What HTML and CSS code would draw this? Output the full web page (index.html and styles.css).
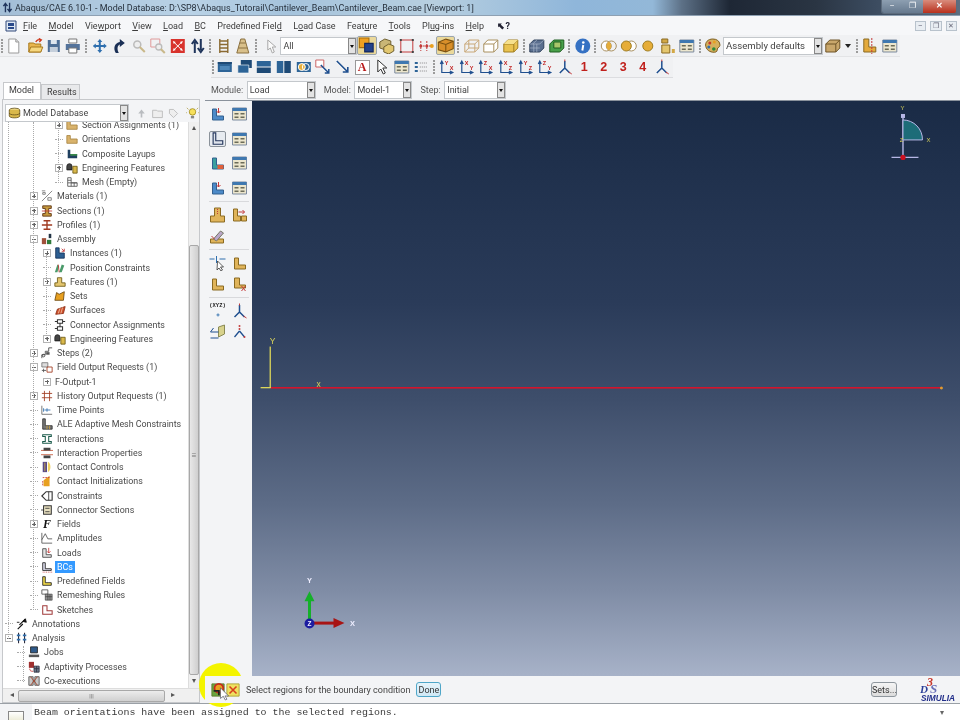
FILE: index.html
```html
<!DOCTYPE html>
<html lang="en">
<head>
<meta charset="utf-8">
<title>Abaqus/CAE</title>
<link rel="stylesheet" href="styles.css">
</head>
<body>
<svg class="sprite" aria-hidden="true">
  <symbol id="new" viewBox="0 0 16 16"><path d="M3 1h7l3 3v11H3z" fill="#fff" stroke="#9a9a9a"/><path d="M10 1v3h3" fill="#ddd" stroke="#9a9a9a"/></symbol>
  <symbol id="open" viewBox="0 0 16 16"><path d="M1 14V5h5l1 1h6v8z" fill="#e9b64e" stroke="#a87a1e"/><path d="M1 14l2-5h12l-2 5z" fill="#f6d77f" stroke="#a87a1e"/><path d="M8 4c1-2 3-3 5-2M11 .5l2.500 1.500-2 2" fill="none" stroke="#cf3a1e" stroke-width="1.400"/></symbol>
  <symbol id="save" viewBox="0 0 16 16"><path d="M2 2h12v12H2z" fill="#4f6f96"/><path d="M5 2h6v4H5z" fill="#dfe6ee"/><path d="M4 9h8v5H4z" fill="#c5cfdb"/></symbol>
  <symbol id="print" viewBox="0 0 16 16"><path d="M4 1h8v4H4z" fill="#fff" stroke="#777"/><path d="M1 6h14v6H1z" fill="#54739b"/><path d="M4 10h8v5H4z" fill="#fff" stroke="#777"/></symbol>
  <symbol id="pan" viewBox="0 0 16 16"><path d="M8 1l2.500 3H9v3h3V5.500L15 8l-3 2.500V9H9v3h1.500L8 15l-2.500-3H7V9H4v1.500L1 8l3-2.500V7h3V4H5.500z" fill="#2f6fae"/></symbol>
  <symbol id="rotate" viewBox="0 0 16 16"><path d="M5 15C2 10 4 5 9 4V1l5 4-5 4V6.500C6.500 7.500 6 11 8 15z" fill="#1a2f55"/></symbol>
  <symbol id="zoom" viewBox="0 0 16 16"><circle cx="6.500" cy="6.500" r="3.500" fill="#eee" stroke="#bbb" stroke-width="1.500"/><path d="M9 9l5 5" stroke="#c9b88a" stroke-width="2"/></symbol>
  <symbol id="boxzoom" viewBox="0 0 16 16"><path d="M1 1h9v8H1z" fill="none" stroke="#e09a9a"/><circle cx="9" cy="9" r="3" fill="#eee" stroke="#bbb" stroke-width="1.300"/><path d="M11 11l4 4" stroke="#c9b88a" stroke-width="2"/></symbol>
  <symbol id="fit" viewBox="0 0 16 16"><path d="M1 1h14v14H1z" fill="#d8322c"/><path d="M3 3l3 1-2 2zM13 3l-1 3-2-2zM3 13l1-3 2 2zM13 13l-3-1 2-2z" fill="#fff"/><path d="M5 5l6 6M11 5l-6 6" stroke="#fff"/></symbol>
  <symbol id="cycle" viewBox="0 0 16 16"><path d="M5 15V4M2 6l3-4 3 4M11 1v11M8 10l3 4 3-4" fill="none" stroke="#20355c" stroke-width="2"/></symbol>
  <symbol id="ladder" viewBox="0 0 16 16"><path d="M4 1v14M12 1v14M4 3h8M4 6.500h8M4 10h8M4 13.500h8" fill="none" stroke="#8a6a32" stroke-width="1.400"/></symbol>
  <symbol id="trap" viewBox="0 0 16 16"><path d="M6 1h4l4 14H2zM5 5h6M3.500 10h9" fill="#d9c08a" stroke="#8a7040"/></symbol>
  <symbol id="pick" viewBox="0 0 16 16"><path d="M4 2l8 7H8.500l2 5-2 1-2-5L4 12z" fill="#fafafa" stroke="#a9a9a9"/></symbol>
  <symbol id="sel1" viewBox="0 0 16 16"><path d="M1 1h9v9H1z" fill="#f0a020" stroke="#a66c10"/><path d="M6 6h8v8H6z" fill="#23418a" stroke="#13275c"/></symbol>
  <symbol id="sel2" viewBox="0 0 16 16"><path d="M1 4l5-3 6 2v6l-5 3-6-2z" fill="#c9b676" stroke="#6f6030"/><path d="M5 9l5-3 5 2v5l-5 3-5-2z" fill="#e2c770" stroke="#6f6030"/></symbol>
  <symbol id="sel3" viewBox="0 0 16 16"><path d="M2 2h12v12H2z" fill="none" stroke="#c43b3b"/><path d="M1 1h2v2H1zM13 1h2v2h-2zM1 13h2v2H1zM13 13h2v2h-2z" fill="#444"/></symbol>
  <symbol id="sel4" viewBox="0 0 16 16"><path d="M2 8h12M3 3v10M9 3v10" stroke="#c43b3b" stroke-dasharray="2 1"/><circle cx="3" cy="8" r="1.500" fill="#c43b3b"/><circle cx="9" cy="8" r="1.500" fill="#c43b3b"/><circle cx="14" cy="8" r="2" fill="#e8a020"/></symbol>
  <symbol id="sel5" viewBox="0 0 16 16"><path d="M1 5l7-3 7 2v7l-7 3-7-2z" fill="#d98f2a" stroke="#7a5010"/><path d="M1 5l7 2 7-3M8 7v7" fill="none" stroke="#7a5010"/></symbol>
  <symbol id="wire" viewBox="0 0 16 16"><path d="M1 6l4-4h10v8l-4 4H1zM1 6h10v8M11 6l4-4M5 2v8h10M5 10l-4 4" fill="none" stroke="#c9a878"/></symbol>
  <symbol id="hid" viewBox="0 0 16 16"><path d="M1 6l4-4h10v8l-4 4H1zM1 6h10v8M11 6l4-4" fill="#fff" stroke="#a9905f"/></symbol>
  <symbol id="solid" viewBox="0 0 16 16"><path d="M1 6l4-4h10v8l-4 4H1z" fill="#e9c24f" stroke="#a07e22"/><path d="M1 6h10v8M11 6l4-4" fill="none" stroke="#a07e22"/><path d="M5 2h10l-4 4H1z" fill="#f6e08c"/></symbol>
  <symbol id="mesh" viewBox="0 0 16 16"><path d="M1 6l4-4h10v8l-4 4H1z" fill="#5b6f8f" stroke="#33445f"/><path d="M1 10h10M5 6v8M8 6v8M11 6l4-4M8 2L4 6M1 6h10" fill="none" stroke="#a9b6c9" stroke-width=".7"/></symbol>
  <symbol id="green" viewBox="0 0 16 16"><path d="M1 6l4-4h10v8l-4 4H1z" fill="#49a04a" stroke="#1f5e20"/><path d="M5 4h7v6H5z" fill="#a9c66a" stroke="#1f5e20"/></symbol>
  <symbol id="info" viewBox="0 0 16 16"><circle cx="8" cy="8" r="7.500" fill="#3571c3"/><circle cx="8.500" cy="4.500" r="1.300" fill="#fff"/><path d="M8.500 7l-1 5.500" stroke="#fff" stroke-width="2"/></symbol>
  <symbol id="c1" viewBox="0 0 16 16"><circle cx="5.500" cy="8" r="5" fill="#fff" stroke="#a9905f"/><circle cx="10.500" cy="8" r="5" fill="none" stroke="#a9905f"/><path d="M8 3.700a5 5 0 0 1 0 8.600a5 5 0 0 1 0-8.600" fill="#e6ad38"/></symbol>
  <symbol id="c2" viewBox="0 0 16 16"><circle cx="10.500" cy="8" r="5" fill="#fff" stroke="#a9905f"/><circle cx="5.500" cy="8" r="5" fill="#e6ad38" stroke="#a07e22"/></symbol>
  <symbol id="c3" viewBox="0 0 16 16"><circle cx="8" cy="8" r="5" fill="#e6ad38" stroke="#a07e22"/></symbol>
  <symbol id="parts" viewBox="0 0 16 16"><path d="M2 1h6v4H2z" fill="#d2a846" stroke="#8a6a22"/><path d="M2 7h8v8H2z" fill="#e4c66e" stroke="#8a6a22"/><path d="M12 11h3v4h-3z" fill="#d2a846"/></symbol>
  <symbol id="table" viewBox="0 0 16 16"><path d="M1 2h14v12H1z" fill="#ece6cd" stroke="#7d8b9f"/><path d="M1 2h14v3H1z" fill="#3f78b0"/><path d="M3 7h4v1.500H3zM9 7h4v1.500H9zM3 10.500h4V12H3zM9 10.500h4V12H9z" fill="#6b6b58"/></symbol>
  <symbol id="palette" viewBox="0 0 16 16"><path d="M8 1C3 1 0 4.500 1 8.500 2 13 7 15 11 14c2-.6 1-3 2-4 1.500-1 2.500-2 2-4C14.500 3 12 1 8 1z" fill="#d6b05c" stroke="#7c5f22"/><circle cx="5" cy="5" r="1.500" fill="#c5362c"/><circle cx="9.500" cy="4" r="1.500" fill="#e8a020"/><circle cx="4" cy="9" r="1.500" fill="#2f6fae"/><circle cx="9" cy="11" r="1.800" fill="#2f8a3a"/></symbol>
  <symbol id="box3d" viewBox="0 0 16 16"><path d="M1 6l4-4h10v8l-4 4H1z" fill="#c9a76b" stroke="#6e5528"/><path d="M1 6h10v8M11 6l4-4" fill="none" stroke="#6e5528"/></symbol>
  <symbol id="bcsym" viewBox="0 0 16 16"><path d="M2 1h5v8h7v5H2z" fill="#e4aa3c" stroke="#8a6a22"/><path d="M10 0v16" stroke="#c43b3b" stroke-dasharray="2 1"/></symbol>
  <symbol id="win1" viewBox="0 0 16 16"><path d="M1 3h14v10H1z" fill="#2d6497"/><path d="M1 3h14v2H1z" fill="#1e4a76"/><path d="M3 7h10v4H3z" fill="#4d86b8"/></symbol>
  <symbol id="win2" viewBox="0 0 16 16"><path d="M4 1h11v8H4z" fill="#1e4a76"/><path d="M1 6h11v8H1z" fill="#2d6497" stroke="#fff" stroke-width=".6"/></symbol>
  <symbol id="win3" viewBox="0 0 16 16"><path d="M1 2h14v5.500H1z" fill="#2d6497"/><path d="M1 8.500h14V14H1z" fill="#1e4a76"/></symbol>
  <symbol id="win4" viewBox="0 0 16 16"><path d="M1 2h6.500v12H1z" fill="#2d6497"/><path d="M8.500 2H15v12H8.500z" fill="#1e4a76"/></symbol>
  <symbol id="link" viewBox="0 0 16 16"><path d="M1 3h14v10H1z" fill="#2d6497"/><circle cx="6" cy="8" r="3.500" fill="#e8b03c" stroke="#fff"/><circle cx="10" cy="8" r="3.500" fill="none" stroke="#fff"/></symbol>
  <symbol id="note" viewBox="0 0 16 16"><path d="M1 1h8v7H1z" fill="#fff" stroke="#c66"/><path d="M6 6l8 8M14 10v4h-4" fill="none" stroke="#1f4f8f" stroke-width="1.500"/></symbol>
  <symbol id="arrowln" viewBox="0 0 16 16"><path d="M2 2l11 11M13 8v5H8" fill="none" stroke="#1f4f8f" stroke-width="1.600"/></symbol>
  <symbol id="cursor" viewBox="0 0 16 16"><path d="M4 1l9 8H9l2.500 5-2 1-2.500-5-3 3z" fill="#fff" stroke="#333"/></symbol>
  <symbol id="legend" viewBox="0 0 16 16"><path d="M2 3h3v2H2zM2 7h3v2H2zM2 11h3v2H2z" fill="#2d6497"/><path d="M7 4h7M7 8h7M7 12h7" stroke="#888" stroke-dasharray="1 1"/></symbol>
  <symbol id="view" viewBox="0 0 16 16"><path d="M3 14V3M1.500 5L3 2l1.500 3M3 13.500h10M11 12l3 1.500-3 1.500" fill="none" stroke="#1f4f8f" stroke-width="1.200"/></symbol>
  <symbol id="triad" viewBox="0 0 16 16"><path d="M8 2v7M8 9l-5 5M8 9l5 5" fill="none" stroke="#1f4f8f" stroke-width="1.500"/><path d="M8 .5v2" stroke="#c43b3b"/><path d="M12 13l3 2" stroke="#c43b3b"/></symbol>
  <symbol id="lshape" viewBox="0 0 16 16"><path d="M3 1h3v9h8v4H3z" fill="#dfe4ec" stroke="#24365c" stroke-width="1.300"/></symbol>
  <symbol id="lblue" viewBox="0 0 16 16"><path d="M3 3h4v7h7v4H3z" fill="#4c8ac8" stroke="#33608f"/><path d="M9 2v5M7 5l2 2 2-2" fill="none" stroke="#c43b3b"/></symbol>
  <symbol id="lcolor" viewBox="0 0 16 16"><path d="M3 3h4v7h7v4H3z" fill="#3aa0a0" stroke="#33608f"/><path d="M8 10h6v4H8z" fill="#e0603a"/></symbol>
  <symbol id="ltan" viewBox="0 0 16 16"><path d="M3 3h4v7h7v4H3z" fill="#e0b45a" stroke="#8a6a22"/></symbol>
  <symbol id="lcut" viewBox="0 0 16 16"><path d="M3 2h5v7h6v3H3z" fill="#e0b45a" stroke="#8a6a22"/><path d="M10 10l4 5M14 10l-4 5" stroke="#c43b3b"/></symbol>
  <symbol id="tee" viewBox="0 0 16 16"><path d="M5 1h6v8h4v6H1V9h4z" fill="#e0b45a" stroke="#8a6a22"/><path d="M8 2v6" stroke="#c43b3b" stroke-dasharray="1 1"/></symbol>
  <symbol id="tee2" viewBox="0 0 16 16"><path d="M2 2h4v7h3v5H2zM10 9h5v5h-5z" fill="#e0b45a" stroke="#8a6a22"/><path d="M7 5h6M11 3l2 2-2 2" fill="none" stroke="#c43b3b"/></symbol>
  <symbol id="brush" viewBox="0 0 16 16"><path d="M1 11h13v4H1z" fill="#e0b45a" stroke="#8a6a22"/><path d="M4 11l7-8 3 2-7 8z" fill="#b9a7c9" stroke="#776"/><path d="M2 8l3 3" stroke="#c43b3b"/></symbol>
  <symbol id="ptcur" viewBox="0 0 16 16"><path d="M0 4h5M10 4h6M7 1v7" stroke="#2f6fae"/><path d="M8 6l6 6h-3l2 3-1.500 1-2-3-2 2z" fill="#fff" stroke="#333" stroke-width=".8"/></symbol>
  <symbol id="csys" viewBox="0 0 16 16"><path d="M8 7v5M5.500 9.500h5" stroke="#2f6fae" stroke-width="1.400"/></symbol>
  <symbol id="plane" viewBox="0 0 16 16"><path d="M9 3l6-2v9l-6 3z" fill="#d8d28c" stroke="#8a8a55"/><path d="M1 8h8M1 14h8M4 4l-3 4" fill="none" stroke="#1f4f8f"/></symbol>
  <symbol id="dots" viewBox="0 0 16 16"><path d="M8 7L3 13M8 7l5 6" fill="none" stroke="#1f4f8f" stroke-width="1.300"/><circle cx="8" cy="2" r="1" fill="#c43b3b"/><circle cx="8" cy="5" r="1" fill="#c43b3b"/><circle cx="13" cy="13" r="1" fill="#c43b3b"/></symbol>
  <symbol id="db" viewBox="0 0 16 16"><ellipse cx="8" cy="4" rx="7" ry="2.500" fill="#e9d27a" stroke="#5c4a16"/><path d="M1 4v8c0 1.400 3 2.500 7 2.500s7-1.100 7-2.500V4" fill="#d9b84a" stroke="#5c4a16"/><path d="M1 8c0 1.400 3 2.500 7 2.500S15 9.400 15 8" fill="none" stroke="#5c4a16"/></symbol>
  <symbol id="bulb" viewBox="0 0 16 16"><circle cx="8" cy="6" r="4" fill="#f6e05c" stroke="#a08a1e"/><path d="M6 11h4v3H6z" fill="#888"/><path d="M1 1l2 2M15 1l-2 2M1 7H0M15 7h1" stroke="#b0a050"/></symbol>
  <symbol id="dbup" viewBox="0 0 16 16"><path d="M8 3l4 5H9v5H7V8H4z" fill="#b9bcc0"/></symbol>
  <symbol id="dbfold" viewBox="0 0 16 16"><path d="M2 4h5l1 1h6v8H2z" fill="#eee" stroke="#b5b5b5"/></symbol>
  <symbol id="dbtag" viewBox="0 0 16 16"><path d="M3 3h5l5 5-5 5-5-5z" fill="#eee" stroke="#b5b5b5"/></symbol>
  <symbol id="t-orange" viewBox="0 0 14 14"><path d="M1 3h4v4h8v5H1z" fill="#d9b36c" stroke="#a88543"/></symbol>
  <symbol id="t-layup" viewBox="0 0 14 14"><path d="M2 2h3v5h8v5H2z" fill="#1f3f5f"/><path d="M5 7h8v2H5z" fill="#3a8a4a"/></symbol>
  <symbol id="t-eng" viewBox="0 0 14 14"><path d="M1 9V5a3 3 0 0 1 6 0v4zM1 9h6" fill="#444" stroke="#222"/><path d="M8 5h5v8H8z" fill="#d9b84a" stroke="#6e5a16"/></symbol>
  <symbol id="t-mesh" viewBox="0 0 14 14"><path d="M2 2h4v6h7v4H2zM2 5h4M2 8h11M6 8v4M9.500 8v4" fill="none" stroke="#555"/></symbol>
  <symbol id="t-mat" viewBox="0 0 14 14"><path d="M1 1h4M1 13L13 1M2 3h3v2H2zM8 9h4v3H8z" stroke="#777" fill="none"/></symbol>
  <symbol id="t-sec" viewBox="0 0 14 14"><path d="M2 1h10v3H9v6h3v3H2v-3h3V4H2z" fill="#c69a3e" stroke="#5a3010"/><path d="M1 7h12" stroke="#c43b3b"/></symbol>
  <symbol id="t-prof" viewBox="0 0 14 14"><path d="M3 2h8M3 12h8M7 2v10M1 7h12" stroke="#a03a20" stroke-width="1.600"/></symbol>
  <symbol id="t-asm" viewBox="0 0 14 14"><path d="M1 13V6h5v7z" fill="#a0503a"/><path d="M7 13V8h5v5z" fill="#2f7a3a"/><path d="M9 1h3v5H9z" fill="#234"/></symbol>
  <symbol id="t-inst" viewBox="0 0 14 14"><path d="M2 1h4v6h6v6H2z" fill="#2d5f92" stroke="#16325a"/><path d="M9 2l3 3M12 2v3H9" fill="none" stroke="#c43b3b"/></symbol>
  <symbol id="t-pos" viewBox="0 0 14 14"><path d="M1 12l3-9 2 2-2 7zM6 12l3-9 3 1-3 8z" fill="#4a9a6a"/><path d="M5 3l1 9" stroke="#c43b3b"/></symbol>
  <symbol id="t-feat" viewBox="0 0 14 14"><path d="M4 2h5v6h4v4H1V8h3z" fill="#e4c66e" stroke="#6e5a16"/></symbol>
  <symbol id="t-sets" viewBox="0 0 14 14"><path d="M1 12l2-9 3 2 6-3-1 10z" fill="#e8a020" stroke="#6e4a10"/></symbol>
  <symbol id="t-surf" viewBox="0 0 14 14"><path d="M2 12l2-6 9-3-2 8z" fill="#d0502c" stroke="#8a2c14"/><path d="M5 11l2-6M8 11l2-7" stroke="#f0c0a0"/></symbol>
  <symbol id="t-conn" viewBox="0 0 14 14"><path d="M1 3h3M1 11h3M4 1h6v4H4zM4 9h6v4H4zM10 3h3M7 5v4" fill="none" stroke="#333" stroke-width="1.200"/></symbol>
  <symbol id="t-step" viewBox="0 0 14 14"><path d="M1 13V9h4V5h4V1h4" fill="none" stroke="#444"/><circle cx="3" cy="10" r="1.500" fill="none" stroke="#444"/><path d="M6 6h4v3H6z" fill="#555"/></symbol>
  <symbol id="t-field" viewBox="0 0 14 14"><path d="M1 2h7v5H1z" fill="#ddd" stroke="#777"/><path d="M7 7h6v6H7z" fill="none" stroke="#a03a20"/><path d="M3 9v4M1 11h5" stroke="#555"/></symbol>
  <symbol id="t-hist" viewBox="0 0 14 14"><path d="M1 4h12M1 9h12M4 1v12M10 1v12" fill="none" stroke="#a03a20"/></symbol>
  <symbol id="t-time" viewBox="0 0 14 14"><path d="M1 2v10h12" fill="none" stroke="#666"/><path d="M4 7h7M3 5v4M7 5v4" stroke="#2f6fae"/></symbol>
  <symbol id="t-ale" viewBox="0 0 14 14"><path d="M2 1h3v8h8v4H2z" fill="#777" stroke="#333"/><path d="M7 9v4M10 9v4" stroke="#c9a240"/></symbol>
  <symbol id="t-int" viewBox="0 0 14 14"><path d="M2 2h10v2H9v6h3v2H2v-2h3V4H2z" fill="#fff" stroke="#1a5a4a" stroke-width="1.200"/></symbol>
  <symbol id="t-ip" viewBox="0 0 14 14"><path d="M0 4h14M0 9h14" stroke="#c4583b"/><path d="M3 1h8v3H3zM3 10h8v3H3z" fill="#444"/></symbol>
  <symbol id="t-cc" viewBox="0 0 14 14"><path d="M2 1h5v12H2z" fill="#5a4a8a"/><path d="M8 1c4 2 4 10 0 12z" fill="#f0d060"/><path d="M4.500 2v10" stroke="#d0b040"/></symbol>
  <symbol id="t-ci" viewBox="0 0 14 14"><path d="M3 13V6l7-5v12z" fill="#e8a020"/><path d="M2 3h8M2 7v6" stroke="#c43b3b" stroke-dasharray="2 1"/></symbol>
  <symbol id="t-con" viewBox="0 0 14 14"><path d="M1 7l5-5h7v10H6z" fill="#fff" stroke="#333" stroke-width="1.300"/><path d="M9 2v10" stroke="#333"/></symbol>
  <symbol id="t-cs" viewBox="0 0 14 14"><path d="M3 2h9v10H3z" fill="#e8e0c0" stroke="#333" stroke-width="1.200"/><path d="M0 7h3M5 5h5M5 9h5" stroke="#333"/></symbol>
  <symbol id="t-amp" viewBox="0 0 14 14"><path d="M1 1v12h12M1 9l4-7 3 6h5" fill="none" stroke="#555"/></symbol>
  <symbol id="t-load" viewBox="0 0 14 14"><path d="M2 2h4v7h6v3H2z" fill="#e4e4e4" stroke="#444"/><path d="M9 1v6M7 5l2 2 2-2" fill="none" stroke="#c43b3b"/></symbol>
  <symbol id="t-bc" viewBox="0 0 14 14"><path d="M2 2h3v7h7v2H2z" fill="#dde" stroke="#222"/><path d="M2 13h11" stroke="#c43b3b" stroke-dasharray="1 1"/></symbol>
  <symbol id="t-pf" viewBox="0 0 14 14"><path d="M2 2h3v7h7v3H2z" fill="#f0d848" stroke="#222"/></symbol>
  <symbol id="t-rem" viewBox="0 0 14 14"><path d="M1 1h7v5H1z" fill="#fff" stroke="#555"/><path d="M5 6h8v7H5zM5 9h8M8 6v7M10.500 6v7" fill="#999" stroke="#333" stroke-width=".7"/></symbol>
  <symbol id="t-sk" viewBox="0 0 14 14"><path d="M2 2h5v6h6v4H2z" fill="#fff" stroke="#a03a3a" stroke-width="1.200"/></symbol>
  <symbol id="t-ann" viewBox="0 0 14 14"><path d="M2 13l6-6M11 1L4 8" stroke="#111" stroke-width="1.300"/><path d="M11 1l1 4-4-1zM1 5h3" fill="#111" stroke="#111"/></symbol>
  <symbol id="t-ana" viewBox="0 0 14 14"><path d="M3 1v12M10 1v12" stroke="#223" stroke-width="1.200"/><path d="M1 3h4v2H1zM8 3h4v2H8zM1 8h4v2H1zM8 8h4v2H8z" fill="#2f6fae"/></symbol>
  <symbol id="t-job" viewBox="0 0 14 14"><path d="M3 1h8v7H3z" fill="#2f5a8a" stroke="#222"/><path d="M1 10h12v3H1z" fill="#555"/></symbol>
  <symbol id="t-adp" viewBox="0 0 14 14"><path d="M1 1h6v7H1z" fill="#a03030"/><path d="M7 6h6v7H7zM7 9h6M10 6v7" fill="#6a7a8a" stroke="#334"/><path d="M2 9c0 3 2 3 4 3" stroke="#c43b3b" fill="none"/></symbol>
  <symbol id="t-coe" viewBox="0 0 14 14"><path d="M1 2h5v10H1zM8 2h5v10H8z" fill="#c8c8c8" stroke="#555"/><path d="M3 2l8 10M11 2L3 12" stroke="#a03a20"/></symbol>
  <symbol id="back" viewBox="0 0 16 16"><path d="M1 1h14v14H1z" fill="#6aa53e" stroke="#5b7a2e"/><circle cx="9" cy="6" r="5" fill="#e8a020" stroke="#c8281c" stroke-width="2"/><path d="M3 9h6v5" fill="none" stroke="#222" stroke-width="2"/></symbol>
  <symbol id="cancel" viewBox="0 0 16 16"><path d="M1 1h14v14H1z" fill="#efe060" stroke="#a9a030"/><path d="M4 4l8 8M12 4l-8 8" stroke="#d8401c" stroke-width="1.800"/></symbol>
</svg>

<div class="app">
  <header class="titlebar">
    <svg class="tbicon"><use href="#cycle"/></svg>
    <span class="titletext">Abaqus/CAE 6.10-1 - Model Database: D:\SP8\Abaqus_Tutorail\Cantilever_Beam\Cantilever_Beam.cae [Viewport: 1]</span>
    <div class="winbtns"><span class="wb wmin">–</span><span class="wb wmax">❐</span><span class="wb wclose">✕</span></div>
  </header>

  <nav class="menubar">
    <svg class="appicon" viewBox="0 0 12 12"><path d="M1 1h10v10H1z" fill="#dfe8f2" stroke="#334a7a"/><path d="M3 3h6v3H3z" fill="#2a4a8a"/><path d="M3 7h6v2H3z" fill="#2a4a8a"/></svg>
    <span class="mi"><u>F</u>ile</span><span class="mi"><u>M</u>odel</span><span class="mi">Vie<u>w</u>port</span><span class="mi"><u>V</u>iew</span><span class="mi"><u>L</u>oad</span><span class="mi"><u>B</u>C</span><span class="mi">Predefined Fiel<u>d</u></span><span class="mi">L<u>o</u>ad Case</span><span class="mi">Feat<u>u</u>re</span><span class="mi"><u>T</u>ools</span><span class="mi">Pl<u>u</u>g-ins</span><span class="mi"><u>H</u>elp</span><span class="helpq">⬉?</span>
    <div class="mdibtns"><span class="mdi">–</span><span class="mdi">❐</span><span class="mdi">✕</span></div>
  </nav>

  <div class="tbrow row1">
    <i class="grip first"></i>
    <svg class="ic"><use href="#new"/></svg><svg class="ic wide"><use href="#open"/></svg><svg class="ic"><use href="#save"/></svg><svg class="ic"><use href="#print"/></svg>
    <i class="grip"></i>
    <svg class="ic"><use href="#pan"/></svg><svg class="ic"><use href="#rotate"/></svg><svg class="ic"><use href="#zoom"/></svg><svg class="ic"><use href="#boxzoom"/></svg><svg class="ic"><use href="#fit"/></svg><svg class="ic"><use href="#cycle"/></svg>
    <i class="grip"></i>
    <svg class="ic"><use href="#ladder"/></svg><svg class="ic"><use href="#trap"/></svg>
    <i class="grip pad"></i>
    <svg class="ic"><use href="#pick"/></svg>
    <div class="combo c-all"><span>All</span><b></b></div>
    <svg class="ic on"><use href="#sel1"/></svg><svg class="ic"><use href="#sel2"/></svg><svg class="ic"><use href="#sel3"/></svg><svg class="ic"><use href="#sel4"/></svg><svg class="ic on"><use href="#sel5"/></svg>
    <i class="grip"></i>
    <svg class="ic"><use href="#wire"/></svg><svg class="ic"><use href="#hid"/></svg><svg class="ic"><use href="#solid"/></svg>
    <i class="grip"></i>
    <svg class="ic"><use href="#mesh"/></svg><svg class="ic"><use href="#green"/></svg>
    <i class="grip"></i>
    <svg class="ic"><use href="#info"/></svg>
    <i class="grip"></i>
    <svg class="ic"><use href="#c1"/></svg><svg class="ic"><use href="#c2"/></svg><svg class="ic"><use href="#c3"/></svg><svg class="ic"><use href="#parts"/></svg><svg class="ic"><use href="#table"/></svg>
    <i class="grip"></i>
    <svg class="ic"><use href="#palette"/></svg>
    <div class="combo c-asm"><span>Assembly defaults</span><b></b></div>
    <svg class="ic"><use href="#box3d"/></svg><span class="caret"></span>
    <i class="grip"></i>
    <svg class="ic"><use href="#bcsym"/></svg><svg class="ic"><use href="#table"/></svg>
  </div>

  <div class="tbrow row2">
    <i class="grip first"></i>
    <svg class="ic"><use href="#win1"/></svg><svg class="ic"><use href="#win2"/></svg><svg class="ic"><use href="#win3"/></svg><svg class="ic"><use href="#win4"/></svg><svg class="ic"><use href="#link"/></svg><svg class="ic"><use href="#note"/></svg><svg class="ic"><use href="#arrowln"/></svg>
    <span class="abox">A</span>
    <svg class="ic"><use href="#cursor"/></svg><svg class="ic"><use href="#table"/></svg><svg class="ic"><use href="#legend"/></svg>
    <i class="grip"></i>
    <svg class="ic" viewBox="0 0 16 16"><use href="#view"/><text x="6" y="6" class="ax">Y</text><text x="11" y="11" class="ax">X</text></svg>
    <svg class="ic" viewBox="0 0 16 16"><use href="#view"/><text x="6" y="6" class="ax">X</text><text x="11" y="11" class="ax">Y</text></svg>
    <svg class="ic" viewBox="0 0 16 16"><use href="#view"/><text x="6" y="6" class="ax">Z</text><text x="11" y="11" class="ax">X</text></svg>
    <svg class="ic" viewBox="0 0 16 16"><use href="#view"/><text x="6" y="6" class="ax">X</text><text x="11" y="11" class="ax">Z</text></svg>
    <svg class="ic" viewBox="0 0 16 16"><use href="#view"/><text x="6" y="6" class="ax">Y</text><text x="11" y="11" class="ax">Z</text></svg>
    <svg class="ic" viewBox="0 0 16 16"><use href="#view"/><text x="6" y="6" class="ax">Z</text><text x="11" y="11" class="ax">Y</text></svg>
    <svg class="ic"><use href="#triad"/></svg>
    <span class="num">1</span><span class="num">2</span><span class="num">3</span><span class="num">4</span>
    <svg class="ic"><use href="#triad"/></svg>
  </div>

  <div class="main">
    <aside class="left">
      <div class="tabs"><span class="tab active">Model</span><span class="tab">Results</span></div>
      <div class="panel">
        <div class="dbrow">
          <div class="combo c-db"><svg class="dbic"><use href="#db"/></svg><span>Model Database</span><b></b></div>
          <svg class="dbtool"><use href="#dbup"/></svg><svg class="dbtool"><use href="#dbfold"/></svg><svg class="dbtool"><use href="#dbtag"/></svg><svg class="bulb"><use href="#bulb"/></svg>
        </div>
        <div class="treewrap">
          <div class="tree">
            <i class="guide g1"></i><i class="guide g2"></i><i class="guide g3"></i><i class="guide g4"></i><i class="guide g5"></i>
            <ul class="treelist">
              <li class="r l3"><i class="exp plus"></i><svg class="ti"><use href="#t-orange"/></svg><span>Section Assignments (1)</span></li>
              <li class="r l3"><i class="exp leaf"></i><svg class="ti"><use href="#t-orange"/></svg><span>Orientations</span></li>
              <li class="r l3"><i class="exp leaf"></i><svg class="ti"><use href="#t-layup"/></svg><span>Composite Layups</span></li>
              <li class="r l3"><i class="exp plus"></i><svg class="ti"><use href="#t-eng"/></svg><span>Engineering Features</span></li>
              <li class="r l3"><i class="exp leaf"></i><svg class="ti"><use href="#t-mesh"/></svg><span>Mesh (Empty)</span></li>
              <li class="r l1"><i class="exp plus"></i><svg class="ti"><use href="#t-mat"/></svg><span>Materials (1)</span></li>
              <li class="r l1"><i class="exp plus"></i><svg class="ti"><use href="#t-sec"/></svg><span>Sections (1)</span></li>
              <li class="r l1"><i class="exp plus"></i><svg class="ti"><use href="#t-prof"/></svg><span>Profiles (1)</span></li>
              <li class="r l1"><i class="exp minus"></i><svg class="ti"><use href="#t-asm"/></svg><span>Assembly</span></li>
              <li class="r l2"><i class="exp plus"></i><svg class="ti"><use href="#t-inst"/></svg><span>Instances (1)</span></li>
              <li class="r l2"><i class="exp leaf"></i><svg class="ti"><use href="#t-pos"/></svg><span>Position Constraints</span></li>
              <li class="r l2"><i class="exp plus"></i><svg class="ti"><use href="#t-feat"/></svg><span>Features (1)</span></li>
              <li class="r l2"><i class="exp leaf"></i><svg class="ti"><use href="#t-sets"/></svg><span>Sets</span></li>
              <li class="r l2"><i class="exp leaf"></i><svg class="ti"><use href="#t-surf"/></svg><span>Surfaces</span></li>
              <li class="r l2"><i class="exp leaf"></i><svg class="ti"><use href="#t-conn"/></svg><span>Connector Assignments</span></li>
              <li class="r l2"><i class="exp plus"></i><svg class="ti"><use href="#t-eng"/></svg><span>Engineering Features</span></li>
              <li class="r l1"><i class="exp plus"></i><svg class="ti"><use href="#t-step"/></svg><span>Steps (2)</span></li>
              <li class="r l1"><i class="exp minus"></i><svg class="ti"><use href="#t-field"/></svg><span>Field Output Requests (1)</span></li>
              <li class="r l2 noicon"><i class="exp plus"></i><span>F-Output-1</span></li>
              <li class="r l1"><i class="exp plus"></i><svg class="ti"><use href="#t-hist"/></svg><span>History Output Requests (1)</span></li>
              <li class="r l1"><i class="exp leaf"></i><svg class="ti"><use href="#t-time"/></svg><span>Time Points</span></li>
              <li class="r l1"><i class="exp leaf"></i><svg class="ti"><use href="#t-ale"/></svg><span>ALE Adaptive Mesh Constraints</span></li>
              <li class="r l1"><i class="exp leaf"></i><svg class="ti"><use href="#t-int"/></svg><span>Interactions</span></li>
              <li class="r l1"><i class="exp leaf"></i><svg class="ti"><use href="#t-ip"/></svg><span>Interaction Properties</span></li>
              <li class="r l1"><i class="exp leaf"></i><svg class="ti"><use href="#t-cc"/></svg><span>Contact Controls</span></li>
              <li class="r l1"><i class="exp leaf"></i><svg class="ti"><use href="#t-ci"/></svg><span>Contact Initializations</span></li>
              <li class="r l1"><i class="exp leaf"></i><svg class="ti"><use href="#t-con"/></svg><span>Constraints</span></li>
              <li class="r l1"><i class="exp leaf"></i><svg class="ti"><use href="#t-cs"/></svg><span>Connector Sections</span></li>
              <li class="r l1"><i class="exp plus"></i><span class="fx">F</span><span>Fields</span></li>
              <li class="r l1"><i class="exp leaf"></i><svg class="ti"><use href="#t-amp"/></svg><span>Amplitudes</span></li>
              <li class="r l1"><i class="exp leaf"></i><svg class="ti"><use href="#t-load"/></svg><span>Loads</span></li>
              <li class="r l1"><i class="exp leaf"></i><svg class="ti"><use href="#t-bc"/></svg><span class="sel">BCs</span></li>
              <li class="r l1"><i class="exp leaf"></i><svg class="ti"><use href="#t-pf"/></svg><span>Predefined Fields</span></li>
              <li class="r l1"><i class="exp leaf"></i><svg class="ti"><use href="#t-rem"/></svg><span>Remeshing Rules</span></li>
              <li class="r l1"><i class="exp leaf"></i><svg class="ti"><use href="#t-sk"/></svg><span>Sketches</span></li>
              <li class="r l0"><i class="exp leaf"></i><svg class="ti"><use href="#t-ann"/></svg><span>Annotations</span></li>
              <li class="r l0"><i class="exp minus"></i><svg class="ti"><use href="#t-ana"/></svg><span>Analysis</span></li>
              <li class="r la"><i class="exp leaf"></i><svg class="ti"><use href="#t-job"/></svg><span>Jobs</span></li>
              <li class="r la"><i class="exp leaf"></i><svg class="ti"><use href="#t-adp"/></svg><span>Adaptivity Processes</span></li>
              <li class="r la"><i class="exp leaf"></i><svg class="ti"><use href="#t-coe"/></svg><span>Co-executions</span></li>
            </ul>
          </div>
          <div class="vscroll"><span class="sa">▴</span><div class="vthumb"><span class="vgrip">≡</span></div><span class="sa">▾</span></div>
        </div>
        <div class="hscroll"><span class="sa">◂</span><div class="hthumb">|||</div><span class="sa">▸</span></div>
      </div>
    </aside>

    <div class="work">
      <div class="context">
        <label class="ctx lab1">Module:</label><div class="combo c-mod"><span>Load</span><b></b></div>
        <label class="ctx">Model:</label><div class="combo c-model"><span>Model-1</span><b></b></div>
        <label class="ctx">Step:</label><div class="combo c-step"><span>Initial</span><b></b></div>
      </div>
      <div class="center">
        <div class="strip">
          <div class="sgroup"><svg class="si"><use href="#lblue"/></svg><svg class="si"><use href="#table"/></svg><svg class="si on"><use href="#lshape"/></svg><svg class="si"><use href="#table"/></svg><svg class="si"><use href="#lcolor"/></svg><svg class="si"><use href="#table"/></svg><svg class="si"><use href="#lblue"/></svg><svg class="si"><use href="#table"/></svg></div>
          <div class="sgroup tight"><svg class="si"><use href="#tee"/></svg><svg class="si"><use href="#tee2"/></svg><svg class="si"><use href="#brush"/></svg></div>
          <div class="sgroup tight"><svg class="si"><use href="#ptcur"/></svg><svg class="si"><use href="#ltan"/></svg><svg class="si"><use href="#ltan"/></svg><svg class="si"><use href="#lcut"/></svg></div>
          <div class="sgroup tight last"><span class="xyz"><span>(XYZ)</span><svg class="xyzic"><use href="#csys"/></svg></span><svg class="si"><use href="#triad"/></svg><svg class="si"><use href="#plane"/></svg><svg class="si"><use href="#dots"/></svg></div>
        </div>
        <div class="viewport">
          <svg class="canvas" viewBox="0 0 708 576">
            <rect x="18" y="286.500" width="672" height="1.600" fill="#d4142c"/>
            <circle cx="690" cy="287.500" r="1.500" fill="#e09a30"/>
            <rect x="17" y="246" width="1.300" height="41.500" fill="#dcd65a"/>
            <rect x="8" y="286.500" width="10" height="1.300" fill="#dcd65a"/>
            <text x="20" y="243" class="yl" text-anchor="middle">Y</text>
            <text x="66" y="286" class="yl" text-anchor="middle">x</text>

            <path d="M651.500 17V56M640 56.500H667" stroke="#b7b7e6" stroke-width="1.400" fill="none"/>
            <rect x="649.500" y="13" width="4" height="4" fill="#b7b7e6"/>
            <path d="M651.500 19A19.500 19.500 0 0 1 671 39H651.500z" fill="#1d6c78" stroke="#b7b7e6"/>
            <circle cx="651.500" cy="56.500" r="2.600" fill="#cc1020"/>
            <text x="651" y="9" class="yl sm" text-anchor="middle">Y</text>
            <text x="677" y="41" class="yl sm" text-anchor="middle">X</text>
            <text x="650" y="41" class="yl sm" text-anchor="middle">Z</text>

            <path d="M57 523V498" stroke="#15b02a" stroke-width="3"/>
            <path d="M52 501L57 491 62 501z" fill="#15b02a"/>
            <path d="M57 523H82" stroke="#a81414" stroke-width="3"/>
            <path d="M81 518L92 523 81 528z" fill="#a81414"/>
            <circle cx="57" cy="523.500" r="5" fill="#1c1ca0"/>
            <text x="57" y="526" class="wh z" text-anchor="middle">Z</text>
            <text x="57" y="483" class="wh" text-anchor="middle">Y</text>
            <text x="100" y="526" class="wh" text-anchor="middle">X</text>
          </svg>
        </div>
      </div>
      <div class="prompt">
        <svg class="pi"><use href="#back"/></svg><svg class="pi"><use href="#cancel"/></svg>
        <span class="ptext">Select regions for the boundary condition</span>
        <button class="btn done">Done</button>
        <button class="btn sets">Sets...</button>
        <svg class="logo" viewBox="0 0 42 26">
          <text class="lmark"><tspan x="12" y="9" class="m3">3</tspan><tspan x="5" y="16" class="md">D</tspan><tspan x="15" y="16" class="ms">S</tspan></text>
          <text x="6" y="24" class="lsim">SIMULIA</text>
        </svg>
      </div>
    </div>
  </div>

  <footer class="msgbar">
    <span class="msgicon"></span>
    <div class="msg">Beam orientations have been assigned to the selected regions.</div>
    <span class="msgarrow">▾</span>
  </footer>

  <div class="spot"></div>
  <svg class="pointer" viewBox="0 0 16 16"><path d="M3 1l10 10H8.500l2.500 4-2 1-2.500-4.500L3 14z" fill="#fff" stroke="#445" stroke-width=".8"/></svg>
</div>
</body>
</html>
```

FILE: styles.css
```css
* { box-sizing: border-box; }
html, body { margin: 0; padding: 0; background: #f5f6f7; }
.sprite { position: absolute; width: 0; height: 0; }

.app {
  position: relative;
  width: 960px;
  height: 720px;
  overflow: hidden;
  display: flex;
  flex-direction: column;
  background: #f3f4f6;
  font-family: Roboto, "Noto Sans", sans-serif;
  color: #3c3c3c;
  filter: blur(.4px);
}

.titlebar {
  height: 16px;
  flex: none;
  display: flex;
  align-items: center;
  padding-left: 2px;
  background: linear-gradient(90deg, #a3bed6 0, #b9d2e6 20%, #a5c3dc 30%, #b7cfe0 45%, #8fb6da 60%, #93b8d8 68%, #5d7187 71%, #1e2735 76%, #2a3543 85%, #3b4b5f 91%, #5d6e80 100%);
  border-bottom: 1px solid #8ea0b2;
  font-size: 8.950px;
  color: #26303c;
}
.tbicon { width: 11px; height: 11px; margin-right: 2px; flex: none; }
.titletext { white-space: nowrap; }
.winbtns { margin-left: auto; margin-right: 3px; display: flex; height: 14px; align-self: flex-start; border: 1px solid #5c6b7c; border-top: 0; border-radius: 0 0 3px 3px; overflow: hidden; }
.wb { color: #fff; font-size: 8px; line-height: 12px; text-align: center; }
.wmin { width: 20px; background: linear-gradient(#8d9fb1, #66798e); }
.wmax { width: 21px; background: linear-gradient(#8d9fb1, #66798e); }
.wclose { width: 33px; background: linear-gradient(#d98c7c, #b8301c); font-weight: 700; }

.menubar {
  height: 19px;
  flex: none;
  display: flex;
  align-items: center;
  background: #f6f7f9;
  font-size: 9px;
  padding-left: 5px;
}
.appicon { width: 12px; height: 12px; flex: none; margin-right: 6px; }
.mi { white-space: nowrap; margin-right: 11.400px; }
.mi u { text-underline-offset: 1px; }
.helpq { margin-left: 2px; font-size: 9px; font-weight: 700; color: #223; }
.mdibtns { margin-left: auto; margin-right: 3px; display: flex; gap: 4px; }
.mdi { width: 11.500px; height: 10px; border: 1px solid #b8c2cc; background: #e8edf2; color: #667; font-size: 7px; line-height: 8px; text-align: center; }

.tbrow { flex: none; display: flex; align-items: center; background: #f0f1f3; }
.row1 { height: 22px; width: 900px; border-bottom: 1px solid #e3e4e6; }
.row2 { height: 21px; margin-left: 211px; width: 462px; border-bottom: 1px solid #dcdde0; }
.grip { width: 6.500px; height: 14px; flex: none; background: radial-gradient(circle at 1px 1px, #999 .7px, transparent 1px) 2px 0 / 3px 3px repeat-y; }
.grip.first { width: 4.200px; background-position: 1px 0; }
.grip.pad { width: 9px; }
.ic { width: 19.600px; height: 16px; flex: none; }
.ic.wide { margin-left: 2px; margin-right: -1.500px; }
.ic.on { height: 19px; background: #ead89a; border: 1px solid #9aa4ae; border-radius: 2px; }
.ax { font: 700 5.500px "Liberation Sans", sans-serif; fill: #c02020; }
.abox { width: 15px; height: 15px; margin: 0 2.300px; flex: none; border: 1px solid #999; background: #fff; color: #b81c1c; font: 700 12px/13px "Liberation Serif", serif; text-align: center; }
.num { width: 19.500px; flex: none; text-align: center; color: #c0201c; font: 700 12.500px/1 "Liberation Sans", sans-serif; }
.caret { width: 0; height: 0; margin: 0 3px 0 2px; border: 3px solid transparent; border-top: 4px solid #222; border-bottom: 0; }

.combo {
  height: 18px;
  flex: none;
  display: flex;
  align-items: center;
  background: #fff;
  border: 1px solid #c4c8cc;
  font-size: 9px;
  color: #444;
  padding-left: 2px;
}
.combo span { flex: 1; white-space: nowrap; }
.combo b { width: 8px; height: 16px; flex: none; background: #e3e3e3; border: 1px solid #888; position: relative; }
.combo b::after { content: ""; position: absolute; left: 1px; top: 6px; border: 2px solid transparent; border-top: 3px solid #111; }
.c-all { width: 77px; margin: 0 0 0 -1px; }
.c-asm { width: 100px; font-size: 9.600px; }
.c-mod { width: 69px; }
.c-model { width: 58px; }
.c-step { width: 62px; }
.c-db { width: 124px; }

.main { flex: 1; display: flex; min-height: 0; }
.left { width: 205px; flex: none; padding: 4px 0 0 3px; display: flex; flex-direction: column; }
.tabs { display: flex; height: 17px; align-items: flex-end; font-size: 9px; }
.tab { height: 15px; padding: 0 5px; line-height: 15px; background: #e8e9eb; border: 1px solid #c6c8cb; border-bottom: 0; width: 39px; }
.tab.active { height: 17px; width: 38px; background: #fff; }
.panel { flex: 1; min-height: 0; width: 198px; margin-left: -1px; padding-top: 4px; border: 1px solid #c6c8cb; background: #f3f4f6; display: flex; flex-direction: column; }
.dbrow { height: 18px; flex: none; display: flex; align-items: center; padding-left: 2px; gap: 1px; }
.dbic { width: 13px; height: 12px; margin-right: 2px; flex: none; }
.dbtool { width: 13px; height: 13px; margin-left: 2px; flex: none; }
.dbtool:first-of-type { margin-left: 5px; }
.bulb { width: 13px; height: 13px; margin-left: 5px; flex: none; }

.treewrap { flex: 1; min-height: 0; display: flex; background: #fff; }
.tree { flex: 1; position: relative; overflow: hidden; }
.treelist { list-style: none; margin: -4px 0 0; padding: 0; }
.r { display: flex; align-items: center; height: 14.260px; font-size: 8.900px; white-space: nowrap; color: #4a4a4a; }
.r.l0 { padding-left: 2px; }
.r.l1 { padding-left: 27px; }
.r.l2 { padding-left: 40px; }
.r.l3 { padding-left: 52px; }
.r.la { padding-left: 14px; }
.exp { width: 8px; height: 8px; flex: none; margin-right: 3px; }
.noicon .exp { margin-right: 4px; }
.exp.plus { border: 1px solid #b4b4b4; background: linear-gradient(#666, #666) center / 4px 1px no-repeat, linear-gradient(#666, #666) center / 1px 4px no-repeat, #fff; }
.exp.minus { border: 1px solid #b4b4b4; background: linear-gradient(#666, #666) center / 4px 1px no-repeat, #fff; }
.exp.leaf { height: 0; border-top: 1px dotted #aaa; }
.ti { width: 12px; height: 12px; flex: none; margin-right: 4px; }
.fx { width: 12px; margin-right: 4px; font: italic 700 12px/1 "Liberation Serif", serif; color: #111; text-align: center; }
.sel { background: #3399ff; color: #fff; padding: 1px 2px; margin-left: -2px; }
.guide { position: absolute; width: 0; border-left: 1px dotted #aaa; }
.g1 { left: 5px; top: 0; height: 517px; }
.g2 { left: 30px; top: 0; height: 488px; }
.g3 { left: 43px; top: 132px; height: 86px; }
.g4 { left: 55px; top: 0; height: 61px; }
.g5 { left: 20px; top: 524px; height: 36px; }

.vscroll { width: 11px; flex: none; display: flex; flex-direction: column; align-items: center; background: #f0f0f0; border-left: 1px solid #ddd; }
.sa { font-size: 8px; line-height: 12px; height: 13px; color: #555; flex: none; text-align: center; width: 12px; }
.vscroll .sa:first-child { margin-bottom: 110px; }
.vthumb { flex: 1; width: 10px; background: linear-gradient(90deg, #e8e8e8, #cfcfcf); border: 1px solid #a8a8a8; border-radius: 2px; display: flex; align-items: center; justify-content: center; font-size: 8px; color: #777; }
.vgrip { margin-top: -9px; }
.hscroll { height: 14px; flex: none; display: flex; align-items: center; background: #f0f0f0; border-top: 1px solid #ddd; padding: 0 10px 0 3px; }
.hthumb { width: 147px; height: 12px; margin-right: 2px; background: linear-gradient(#ececec, #d0d0d0); border: 1px solid #a8a8a8; border-radius: 2px; font-size: 6px; line-height: 10px; color: #666; text-align: center; }

.work { flex: 1; min-width: 0; display: flex; flex-direction: column; }
.context { height: 23px; flex: none; display: flex; align-items: center; font-size: 9px; border-bottom: 1px solid #8a929c; padding-top: 1px; }
.ctx { margin: 0 3.500px 0 8px; color: #555; white-space: nowrap; }
.lab1 { margin-left: 6px; }
.center { flex: 1; display: flex; min-height: 0; }
.strip { width: 47px; flex: none; padding: 5px 3px 0 4px; }
.sgroup { display: flex; flex-wrap: wrap; gap: 8.500px 5px; padding-bottom: 5px; margin-bottom: 5px; border-bottom: 1px solid #d8d9dc; }
.sgroup.tight { row-gap: 5px; }
.sgroup.last { border-bottom: 0; }
.si { width: 17px; height: 16px; flex: none; }
.si.on { background: #e7ebf0; border: 1px solid #8b929a; border-radius: 2px; }
.xyz { width: 17px; height: 16px; flex: none; display: flex; flex-direction: column; align-items: center; font: 700 5.500px/6px "Liberation Mono", monospace; color: #222; }
.xyzic { width: 12px; height: 10px; }

.viewport {
  flex: 1;
  position: relative;
  min-width: 0;
  background: linear-gradient(#1a2b46 0, #2a3b59 35%, #3e4e6b 52%, #5d6c87 70%, #7f8ca5 85%, #a7b2c8 100%);
}
.canvas { position: absolute; left: 0; top: 0; width: 100%; height: 100%; }
.yl { font: 8.500px "Liberation Sans", sans-serif; fill: #d8d25a; }
.yl.sm { font-size: 6px; }
.wh { font: 700 7.500px "Liberation Sans", sans-serif; fill: #eef; }
.wh.z { font-size: 6.500px; }

.prompt { height: 27px; flex: none; display: flex; align-items: center; padding-left: 6px; background: #f3f4f6; position: relative; z-index: 6; font-size: 9px; }
.pi { width: 14px; height: 14px; flex: none; margin-right: 1px; }
.ptext { margin-left: 5px; white-space: nowrap; color: #444; }
.btn { height: 15px; padding: 0; font: 9px Roboto, sans-serif; color: #333; border: 1px solid #8f979e; border-radius: 3px; background: linear-gradient(#f5f5f5, #dcdcdc); }
.done { width: 25px; margin-left: 6px; border-color: #4fa6c8; background: linear-gradient(#e6f4fb, #cfe8f5); }
.sets { width: 26px; margin-left: auto; }
.logo { width: 42px; height: 26px; margin: 0 3px 0 18px; flex: none; }
.lmark { font-family: "Liberation Serif", serif; font-style: italic; font-weight: 700; }
.m3 { font-size: 12px; fill: #c8382c; }
.md { font-size: 11px; fill: #2a3f9a; }
.ms { font-size: 13px; fill: #6a70b8; }
.lsim { font: italic 700 8.300px "Liberation Sans", sans-serif; fill: #232f8a; }

.msgbar { height: 17px; flex: none; display: flex; background: #f3f4f6; border-top: 1px solid #9aa0a6; padding-left: 8px; position: relative; }
.msgicon { width: 16px; height: 10px; margin-top: 7px; margin-right: 8px; flex: none; border: 1px solid #888; border-bottom: 0; background: linear-gradient(#fff, #ecebd6); }
.msg { flex: 1; background: #fff; padding: 1px 0 0 2px; font: 9.950px/16px "Liberation Mono", monospace; color: #3a3a3a; white-space: pre; }
.msgarrow { position: absolute; right: 16px; top: 4px; font-size: 8px; color: #666; }

.spot { position: absolute; left: 199px; top: 663px; width: 44px; height: 44px; border-radius: 50%; background: #f4f400; z-index: 5; }
.pointer { position: absolute; left: 218px; top: 686px; width: 13px; height: 15px; z-index: 7; }
```
